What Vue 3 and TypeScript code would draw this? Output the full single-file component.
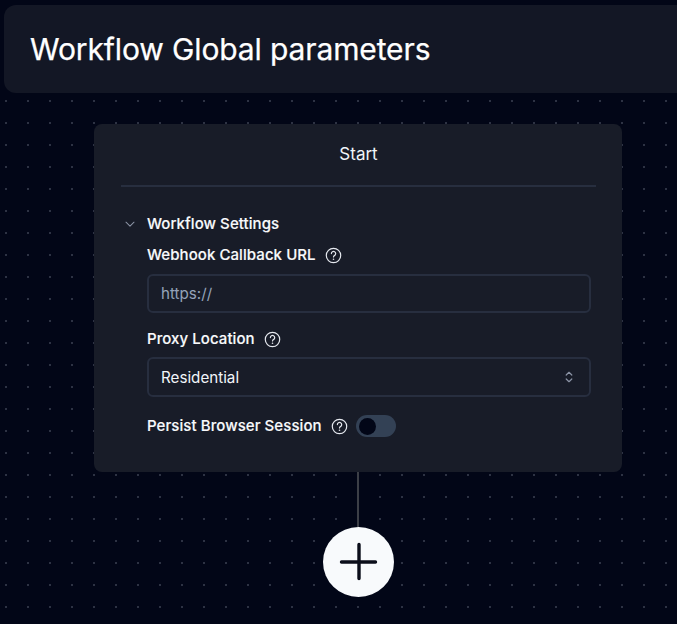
<script setup lang="ts">
const fields = { url: 'https://', proxy: 'Residential' }
</script>

<template>
  <div class="page">
    <header class="titlebar"><h1>Workflow Global parameters</h1></header>
    <section class="card">
      <div class="card-title">Start</div>
      <div class="divider"></div>
      <div class="settings">
        <div class="acc-head">
          <svg class="chev" width="14" height="14" viewBox="0 0 15 15" fill="none"><path d="M3.2 5.6 7.5 9.8l4.3-4.2" stroke="#8b93a5" stroke-width="1.1" stroke-linecap="round" stroke-linejoin="round"/></svg>
          <span class="label">Workflow Settings</span>
        </div>
        <div class="fields">
          <div class="label-row first">
            <span class="label">Webhook Callback URL</span>
            <svg class="help" width="17" height="17" viewBox="0 0 17 17" fill="none"><circle cx="8.5" cy="8.5" r="7.2" stroke="#e6e9ef" stroke-width="1.2"/><path d="M6.4 6.6a2.15 2.15 0 1 1 3.3 1.8c-.8.4-1.2.9-1.2 1.6" stroke="#e6e9ef" stroke-width="1.2" stroke-linecap="round"/><circle cx="8.5" cy="12.2" r=".8" fill="#e6e9ef"/></svg>
          </div>
          <div class="control url">{{ fields.url }}</div>
          <div class="label-row second">
            <span class="label">Proxy Location</span>
            <svg class="help" width="17" height="17" viewBox="0 0 17 17" fill="none"><circle cx="8.5" cy="8.5" r="7.2" stroke="#e6e9ef" stroke-width="1.2"/><path d="M6.4 6.6a2.15 2.15 0 1 1 3.3 1.8c-.8.4-1.2.9-1.2 1.6" stroke="#e6e9ef" stroke-width="1.2" stroke-linecap="round"/><circle cx="8.5" cy="12.2" r=".8" fill="#e6e9ef"/></svg>
          </div>
          <div class="control select">
            <span>{{ fields.proxy }}</span>
            <svg width="12" height="16" viewBox="0 0 12 16" fill="none"><path d="M3.2 6 6 3.3 8.8 6M3.2 10 6 12.7 8.8 10" stroke="#8b93a5" stroke-width="1.2" stroke-linecap="round" stroke-linejoin="round"/></svg>
          </div>
          <div class="label-row third">
            <span class="label">Persist Browser Session</span>
            <svg class="help" width="17" height="17" viewBox="0 0 17 17" fill="none"><circle cx="8.5" cy="8.5" r="7.2" stroke="#e6e9ef" stroke-width="1.2"/><path d="M6.4 6.6a2.15 2.15 0 1 1 3.3 1.8c-.8.4-1.2.9-1.2 1.6" stroke="#e6e9ef" stroke-width="1.2" stroke-linecap="round"/><circle cx="8.5" cy="12.2" r=".8" fill="#e6e9ef"/></svg>
            <span class="switch"><span class="thumb"></span></span>
          </div>
        </div>
      </div>
    </section>
    <div class="connector"></div>
    <button class="add" type="button" aria-label="Add">
      <svg width="40" height="40" viewBox="0 0 40 40" fill="none"><path d="M20 2.5v34M2.5 20h34" stroke="#0b0e1a" stroke-width="3.4" stroke-linecap="round"/></svg>
    </button>
  </div>
</template>

<style>
html, body { margin: 0; background: #020617; }
</style>

<style scoped>
.page {
  width: 677px;
  height: 624px;
  overflow: hidden;
  box-sizing: border-box;
  padding-top: 5px;
  background-color: #020617;
  background-image: radial-gradient(circle at 1px 1px, #5c6273 0.5px, transparent 0.9px);
  background-size: 22px 22px;
  background-position: 5px 100px;
  font-family: Inter, "Liberation Sans", sans-serif;
  display: flex;
  flex-direction: column;
}
.titlebar {
  margin-left: 4px;
  width: 700px;
  height: 88px;
  flex: none;
  border-radius: 12px;
  background: #131725;
  display: flex;
  align-items: center;
  padding-left: 26px;
  box-sizing: border-box;
}
h1 {
  margin: 0;
  font-size: 30px;
  font-weight: 400;
  letter-spacing: -0.12px;
  color: #ffffff;
  line-height: 36px;
  -webkit-text-stroke: 0.25px #ffffff;
}
.card {
  margin: 31px 0 0 94px;
  width: 528px;
  height: 348px;
  flex: none;
  border-radius: 8px;
  background: #181c28;
  box-sizing: border-box;
  padding: 0 26px 0 27px;
}
.card-title {
  height: 61px;
  line-height: 60px;
  text-align: center;
  font-size: 17px;
  color: #f1f5f9;
}
.divider { height: 2px; background: #272e3f; }
.settings { padding-top: 27px; }
.acc-head { display: flex; align-items: center; height: 20px; }
.chev { margin-right: 10px; margin-left: 2px; }
.label {
  font-size: 15px;
  font-weight: 500;
  letter-spacing: 0.07px;
  color: #f8fafc;
  line-height: 20px;
  white-space: nowrap;
  -webkit-text-stroke: 0.15px #f8fafc;
}
.fields { margin-left: 26px; }
.label-row { display: flex; align-items: center; height: 20px; }
.label-row.first { margin-top: 11px; }
.label-row.second { margin-top: 16px; }
.label-row.third { margin-top: 19px; }
.help { margin-left: 9px; flex: none; }
.control {
  box-sizing: border-box;
  border: 2px solid #272e3f;
  border-radius: 6px;
  width: 444px;
  padding: 0 14px 0 12px;
  font-size: 15.2px;
  display: flex;
  align-items: center;
}
.url { height: 39px; margin-top: 9px; color: #94a3b8; }
.select { height: 40px; margin-top: 8px; color: #f1f5f9; justify-content: space-between; }
.switch {
  margin-left: 8px;
  width: 40px;
  height: 22px;
  border-radius: 11px;
  background: #334155;
  display: flex;
  align-items: center;
  padding-left: 3px;
  box-sizing: border-box;
}
.thumb { width: 17px; height: 17px; border-radius: 50%; background: #020617; }
.connector { width: 2px; height: 55px; margin-left: 357px; background: #3c3f47; flex: none; }
.add {
  flex: none;
  width: 71px;
  height: 70px;
  margin-left: 323px;
  padding: 0;
  border: 0;
  border-radius: 50%;
  background: #f8fafc;
  display: flex;
  align-items: center;
  justify-content: center;
}
</style>
